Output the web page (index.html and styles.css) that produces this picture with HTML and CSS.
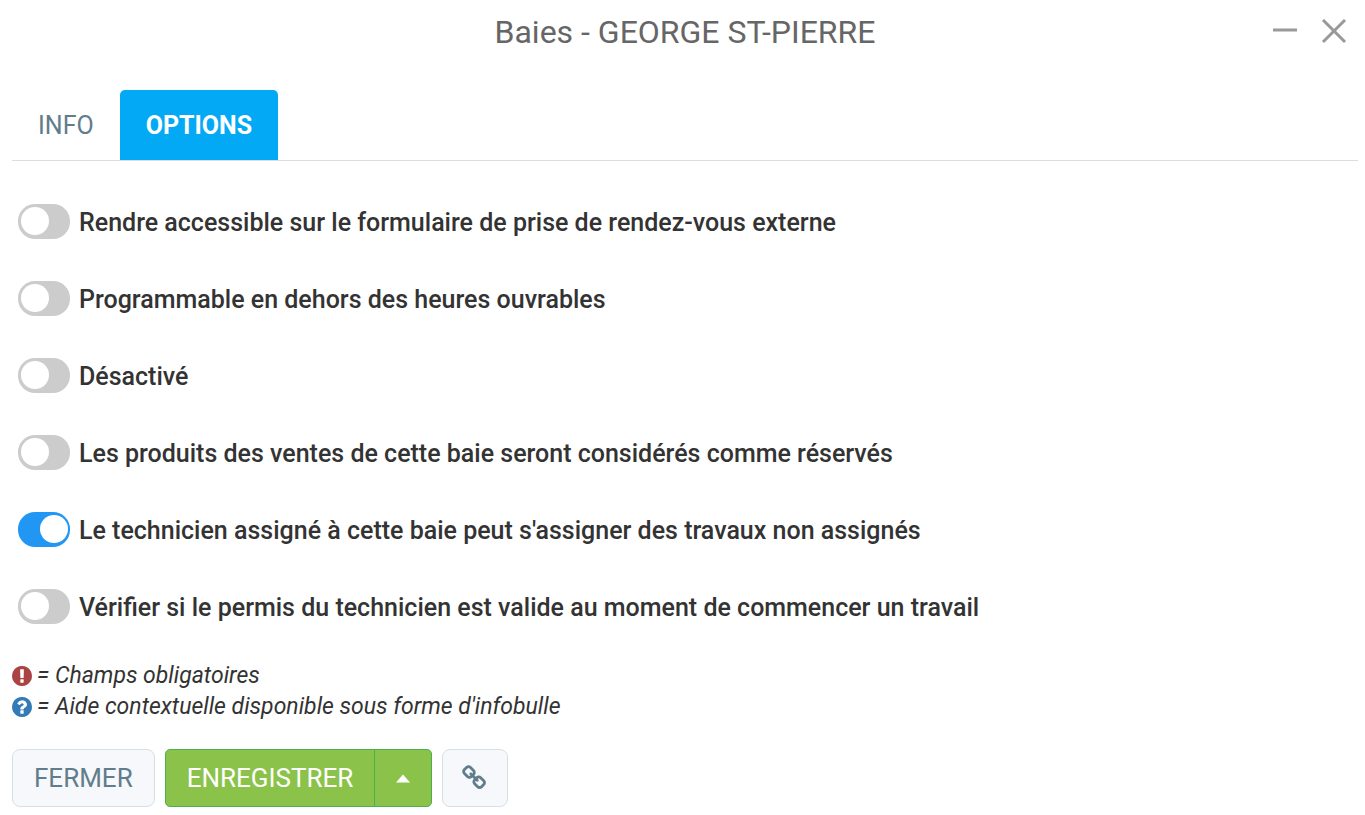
FILE: index.html
```html
<!DOCTYPE html>
<html lang="fr">
<head>
    <meta charset="UTF-8">
    <meta name="viewport" content="width=device-width, initial-scale=1.0">
    <title>Baies - GEORGE ST-PIERRE</title>
    <link rel="stylesheet" href="styles.css">
</head>
<body>
    <header class="modal-header">
        <h1 class="modal-title">Baies - GEORGE ST-PIERRE</h1>
        <div class="window-buttons">
            <button type="button" aria-label="Réduire">
                <svg width="26" height="26" viewBox="0 0 26 26"><path d="M2 11H26" stroke="#999" stroke-width="3"/></svg>
            </button>
            <button type="button" aria-label="Fermer la fenêtre">
                <svg width="26" height="26" viewBox="0 0 26 26"><path d="M2 1L24 23M24 1L2 23" stroke="#999" stroke-width="3"/></svg>
            </button>
        </div>
    </header>

    <nav class="tabs">
        <a href="#info">INFO</a>
        <a href="#options" class="active">OPTIONS</a>
    </nav>

    <form>
        <div class="options" id="options">
            <div class="option">
                <input type="checkbox" class="switch" id="externe">
                <label for="externe">Rendre accessible sur le formulaire de prise de rendez-vous externe</label>
            </div>
            <div class="option">
                <input type="checkbox" class="switch" id="programmable">
                <label for="programmable">Programmable en dehors des heures ouvrables</label>
            </div>
            <div class="option">
                <input type="checkbox" class="switch" id="desactive">
                <label for="desactive">Désactivé</label>
            </div>
            <div class="option">
                <input type="checkbox" class="switch" id="reserves">
                <label for="reserves">Les produits des ventes de cette baie seront considérés comme réservés</label>
            </div>
            <div class="option">
                <input type="checkbox" class="switch" id="assigner" checked>
                <label for="assigner">Le technicien assigné à cette baie peut s'assigner des travaux non assignés</label>
            </div>
            <div class="option">
                <input type="checkbox" class="switch" id="permis">
                <label for="permis">Vérifier si le permis du technicien est valide au moment de commencer un travail</label>
            </div>
        </div>

        <!-- Legend -->
        <div class="legend">
            <p>
                <svg class="required" viewBox="128 128 1536 1536" aria-hidden="true"><path d="M896 128q209 0 385.5 103t279.5 279.5 103 385.5-103 385.5-279.5 279.5-385.5 103-385.5-103-279.5-279.5-103-385.5 103-385.5 279.5-279.5 385.5-103zm128 1247v-190q0-14-9-23.5t-22-9.5h-192q-13 0-23 10t-10 23v190q0 13 10 23t23 10h192q13 0 22-9.5t9-23.5zm-2-344l18-621q0-12-10-18-10-8-24-8h-220q-14 0-24 8-10 6-10 18l17 621q0 10 10 17.5t24 7.5h185q14 0 23.5-7.5t10.5-17.5z"/></svg>
                <span>= Champs obligatoires</span>
            </p>
            <p>
                <svg class="help" viewBox="128 128 1536 1536" aria-hidden="true"><path d="M1024 1376v-192q0-14-9-23t-23-9h-192q-14 0-23 9t-9 23v192q0 14 9 23t23 9h192q14 0 23-9t9-23zm256-672q0-88-55.5-163t-138.5-116-170-41q-243 0-371 213-15 24 8 42l132 100q7 6 19 6 16 0 25-12 53-68 86-92 34-24 86-24 48 0 85.5 26t37.5 59q0 38-20 61t-68 45q-63 28-115.5 86.5t-52.5 125.5v36q0 14 9 23t23 9h192q14 0 23-9t9-23q0-19 21.5-49.5t54.5-49.5q32-18 49-28.5t46-35 44.5-48 28-60.5 12.5-81zm384 192q0 209-103 385.5t-279.5 279.5-385.5 103-385.5-103-279.5-279.5-103-385.5 103-385.5 279.5-279.5 385.5-103 385.5 103 279.5 279.5 103 385.5z"/></svg>
                <span>= Aide contextuelle disponible sous forme d'infobulle</span>
            </p>
        </div>

        <div class="actions">
            <button type="button" class="btn">FERMER</button>
            <div class="btn-group">
                <button type="submit" class="btn btn-save">ENREGISTRER</button>
                <button type="button" class="btn btn-save btn-caret" aria-label="Plus d'actions">
                    <svg width="16" height="10" viewBox="0 0 16 10"><path d="M0 10L8 1L16 10Z" fill="#fff"/></svg>
                </button>
            </div>
            <button type="button" class="btn btn-link" aria-label="Copier le lien">
                <svg width="26" height="26" viewBox="0 0 1792 1792"><path fill="#607d8b" d="M1456 1216q0-40-28-68l-208-208q-28-28-68-28-42 0-72 32 3 3 19 18.5t21.5 21.5 15 19 13 25.5 3.5 27.5q0 40-28 68t-68 28q-15 0-27.5-3.5t-25.5-13-19-15-21.5-21.5-18.5-19q-33 31-33 73 0 40 28 68l206 207q27 27 68 27 40 0 68-26l147-146q28-28 28-67zm-703-705q0-40-28-68l-206-207q-28-28-68-28-39 0-68 27l-147 146q-28 28-28 67 0 40 28 68l208 208q27 27 68 27 42 0 72-31-3-3-19-18.5t-21.5-21.5-15-19-13-25.5-3.5-27.5q0-40 28-68t68-28q15 0 27.5 3.5t25.5 13 19 15 21.5 21.5 18.5 19q33-31 33-73zm895 705q0 120-85 203l-147 146q-83 83-203 83-121 0-204-85l-206-207q-83-83-83-203 0-123 88-209l-88-88q-86 88-208 88-120 0-204-84l-208-208q-84-84-84-204t85-203l147-146q83-83 203-83 121 0 204 85l206 207q83 83 83 203 0 123-88 209l88 88q86-88 208-88 120 0 204 84l208 208q84 84 84 204z"/></svg>
            </button>
        </div>
    </form>
</body>
</html>
```
FILE: styles.css
```css
* {
    box-sizing: border-box;
}

body {
    margin: 0;
    padding: 0 7px 8px 12px;
    font-family: Roboto, sans-serif;
    font-size: 25px;
    color: #333;
    background-color: #fff;
}

button {
    font-family: inherit;
    cursor: pointer;
}

svg {
    display: block;
}

/* Header */
.modal-header {
    display: grid;
    grid-template-columns: 1fr auto 1fr;
    align-items: center;
    height: 63px;
}

.modal-title {
    grid-column: 2;
    margin: 0;
    font-size: 32px;
    font-weight: 400;
    color: #666;
}

.window-buttons {
    display: flex;
    justify-content: flex-end;
    gap: 24px;
    padding-right: 11px;
}

.window-buttons button {
    padding: 0;
    border: none;
    background: none;
}

/* Tabs */
.tabs {
    display: flex;
    margin-top: 27px;
    border-bottom: 1px solid #ddd;
}

.tabs a {
    padding: 2px 26px 0;
    line-height: 68px;
    color: #607d8b;
    text-decoration: none;
    border-radius: 5px 5px 0 0;
}

.tabs .active {
    font-weight: 700;
    color: #fff;
    background-color: #03a9f4;
}

/* Options */
.options {
    display: grid;
    gap: 42px;
    padding: 43px 6px 0;
}

.option {
    display: flex;
    gap: 9px;
}

.option label {
    padding-top: 2px;
    font-weight: 500;
    line-height: 33px;
}

.switch {
    appearance: none;
    flex: none;
    width: 52px;
    height: 35px;
    margin: 0;
    padding: 3px;
    border-radius: 17px;
    background-color: #ccc;
    cursor: pointer;
}

.switch::before {
    content: "";
    display: block;
    width: 28px;
    height: 28px;
    border-radius: 50%;
    background-color: #fff;
}

.switch:checked {
    background-color: #2196f3;
}

.switch:checked::before {
    margin-left: 19px;
}

/* Legend */
.legend {
    margin-top: 36px;
    font-size: 23px;
    font-style: italic;
    line-height: 31px;
}

.legend p {
    display: flex;
    align-items: center;
    gap: 5px;
    margin: 0;
}

.legend svg {
    width: 20px;
    height: 20px;
}

.required {
    fill: #a94442;
}

.help {
    fill: #337ab7;
}

/* Buttons */
.actions {
    display: flex;
    gap: 10px;
    margin-top: 27px;
}

.btn-group {
    display: flex;
}

.btn {
    display: flex;
    align-items: center;
    justify-content: center;
    height: 58px;
    padding: 0 21px;
    border: 1px solid #d8dfe4;
    border-radius: 8px;
    font-size: 26px;
    color: #607d8b;
    background-color: #f6f8fb;
}

.btn-save {
    border-color: #4caf50;
    border-radius: 5px 0 0 5px;
    color: #fff;
    background-color: #8bc34a;
}

.btn-caret {
    width: 58px;
    margin-left: -1px;
    border-radius: 0 5px 5px 0;
}

.btn-link {
    width: 66px;
    padding: 0;
}
```
